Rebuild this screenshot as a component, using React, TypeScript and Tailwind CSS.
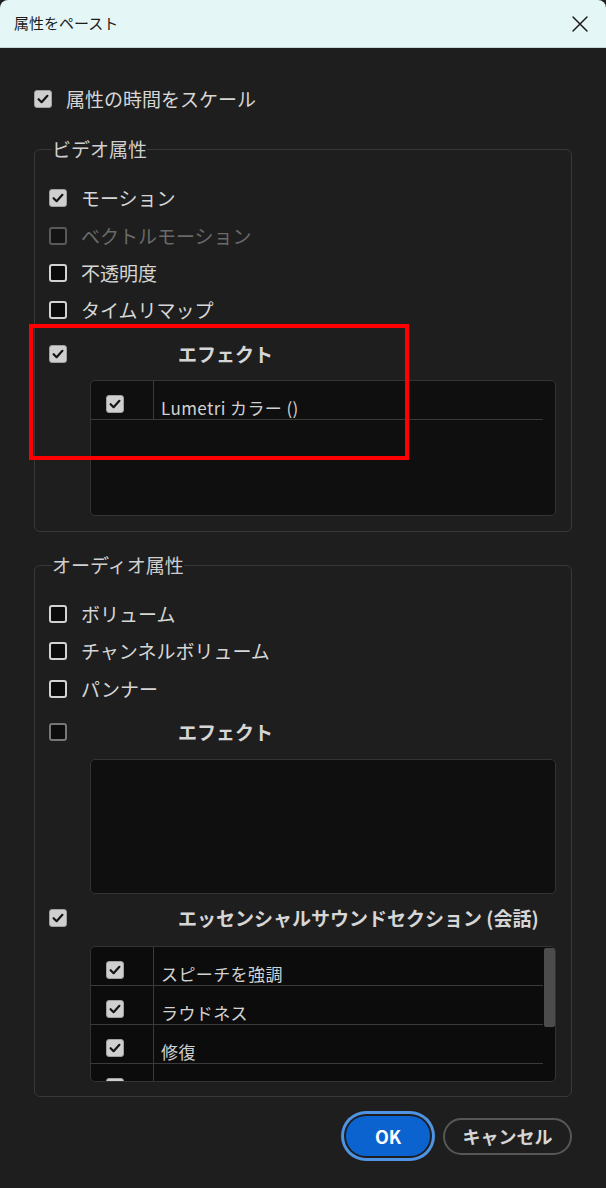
import React from "react";

type CheckState = "on" | "off" | "disabled" | "dim";

function Check({ state }: { state: CheckState }) {
  if (state === "on") {
    return (
      <div className="w-[18px] h-[18px] shrink-0 rounded-[3px] bg-[#cfcfcf] border border-[#a0a0a0] flex items-center justify-center">
        <svg width="14" height="14" viewBox="0 0 14 14">
          <path d="M2.6 7.2 L5.6 10.2 L11.4 3.8" fill="none" stroke="#141414" strokeWidth="2.2" strokeLinecap="round" strokeLinejoin="round" />
        </svg>
      </div>
    );
  }
  const cls =
    state === "off"
      ? "border-[#d2d2d2] bg-[#0b0b0b]"
      : state === "dim"
      ? "border-[#767676] bg-[#0d0d0d]"
      : "border-[#595959] bg-[#141414]";
  return <div className={`w-[18px] h-[18px] shrink-0 rounded-[3px] border-2 ${cls}`} />;
}

function Row({ state, label, mt }: { state: CheckState; label: string; mt: string }) {
  return (
    <div className={`${mt} h-[24px] flex items-center gap-[14px]`}>
      <Check state={state} />
      <span className={`text-[19px] leading-[24px] ${state === "disabled" ? "text-[#6a6a6a]" : "text-[#d6d6d6]"}`}>
        {label}
      </span>
    </div>
  );
}

function GroupHeader({ state, label, mt }: { state: CheckState; label: string; mt: string }) {
  return (
    <div className={`${mt} h-[24px] flex items-center`}>
      <Check state={state} />
      <span className="ml-[111px] text-[19px] leading-[24px] font-bold text-[#d6d6d6]">{label}</span>
    </div>
  );
}

function ListRow({ label }: { label: string }) {
  return (
    <div className="h-[39px] shrink-0 flex border-b border-[#3a3a3a]">
      <div className="w-[63px] shrink-0 pl-[15px] pt-[14px] border-r border-[#3a3a3a]">
        <Check state="on" />
      </div>
      <div className="flex items-end pl-[7px] pb-[1px] text-[17px] leading-[20px] tracking-[0.4px] text-[#d2d2d2]">{label}</div>
    </div>
  );
}

export default function App() {
  return (
    <div className="relative w-[606px] h-[1188px] overflow-hidden bg-[#1e1e1e] font-['Noto_Sans_CJK_JP','Noto_Sans',sans-serif]">
      {/* title bar */}
      <div className="h-[48px] bg-[#e4f7f6] rounded-t-[8px] flex items-center justify-between pl-[14px] pr-[17px] border-b border-[#c8d6d6]">
        <span className="text-[15px] text-[#1c1c1c]">属性をペースト</span>
        <svg width="18" height="18" viewBox="0 0 18 18">
          <path d="M2 2 L16 16 M16 2 L2 16" stroke="#1c1c1c" strokeWidth="1.5" strokeLinecap="round" />
        </svg>
      </div>

      <div className="px-[34px]">
        <div className="mt-[39px] h-[24px] flex items-center gap-[14px]">
          <Check state="on" />
          <span className="text-[19px] leading-[24px] text-[#d6d6d6]">属性の時間をスケール</span>
        </div>

        {/* video */}
        <fieldset className="mt-[26px] border border-[#383838] rounded-[6px] px-[14px] pt-[25px] pb-[15px]">
          <legend className="ml-[3px] text-[19px] leading-[24px] text-[#cfcfcf]">ビデオ属性</legend>
          <Row state="on" label="モーション" mt="mt-0" />
          <Row state="disabled" label="ベクトルモーション" mt="mt-[14px]" />
          <Row state="off" label="不透明度" mt="mt-[13px]" />
          <Row state="off" label="タイムリマップ" mt="mt-[13px]" />
          <GroupHeader state="on" label="エフェクト" mt="mt-[20px]" />
          <div className="mt-[14px] ml-[41px] mr-[1px] h-[136px] border border-[#333333] rounded-[5px] bg-[#0f0f0f] overflow-hidden flex">
            <div className="w-[452px] flex flex-col">
              <ListRow label="Lumetri カラー ()" />
            </div>
          </div>
        </fieldset>

        {/* audio */}
        <fieldset className="mt-[21px] border border-[#383838] rounded-[6px] px-[14px] pt-[25px] pb-[14px]">
          <legend className="ml-[3px] text-[19px] leading-[24px] text-[#cfcfcf]">オーディオ属性</legend>
          <Row state="off" label="ボリューム" mt="mt-0" />
          <Row state="off" label="チャンネルボリューム" mt="mt-[13px]" />
          <Row state="off" label="パンナー" mt="mt-[14px]" />
          <GroupHeader state="dim" label="エフェクト" mt="mt-[19px]" />
          <div className="mt-[15px] ml-[41px] mr-[1px] h-[135px] border border-[#333333] rounded-[5px] bg-[#0f0f0f]" />
          <GroupHeader state="on" label="エッセンシャルサウンドセクション (会話)" mt="mt-[12px]" />
          <div className="mt-[16px] ml-[41px] mr-[1px] h-[136px] border border-[#333333] rounded-[5px] bg-[#0c0c0c] overflow-hidden flex">
            <div className="w-[452px] flex flex-col">
              <ListRow label="スピーチを強調" />
              <ListRow label="ラウドネス" />
              <ListRow label="修復" />
              <ListRow label="" />
            </div>
            <div className="flex-1 flex justify-center pt-[1px]">
              <div className="w-[11px] h-[79px] bg-[#4c4c4c] rounded-[2px]" />
            </div>
          </div>
        </fieldset>

        {/* buttons */}
        <div className="mt-[19px] flex items-center justify-end gap-[13px]">
          <button className="w-[84px] h-[40px] rounded-full bg-[#0b63d0] text-white text-[18px] font-bold ring-[3px] ring-[#4f94e4] ring-offset-2 ring-offset-[#1e1e1e]">
            OK
          </button>
          <button className="w-[129px] h-[37px] rounded-full border-2 border-[#575757] text-[#d6d6d6] text-[18px] font-bold">
            キャンセル
          </button>
        </div>
      </div>

      {/* red annotation */}
      <div className="absolute left-[29px] top-[324px] w-[380px] h-[136px] border-4 border-[#ff0000]" />
    </div>
  );
}
